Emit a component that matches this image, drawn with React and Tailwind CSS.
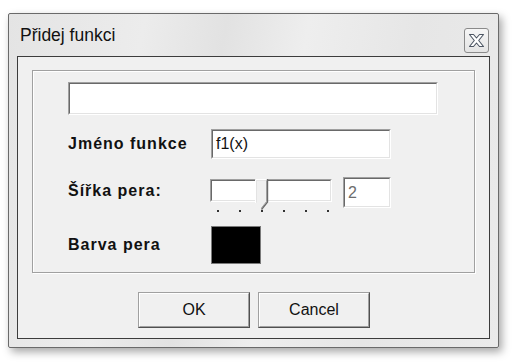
import React from "react";

function Sunken({ className = "", children }) {
  return (
    <div className={`border-t border-l border-t-[#a0a0a0] border-l-[#a0a0a0] border-b border-r border-b-white border-r-white ${className}`}>
      <div className="w-full h-full border-t border-l border-t-[#696969] border-l-[#696969] border-b border-r border-b-[#e3e3e3] border-r-[#e3e3e3] bg-white flex items-center">
        {children}
      </div>
    </div>
  );
}

function Button({ children }) {
  return (
    <div className="w-[112px] h-[36px] border-t border-l border-t-[#a0a0a0] border-l-[#a0a0a0] border-b border-r border-b-[#505050] border-r-[#505050]">
      <div className="w-full h-full border-t border-l border-t-white border-l-white border-b border-r border-b-[#a0a0a0] border-r-[#a0a0a0] bg-[#f0f0f0] flex items-center justify-center text-[16px] text-[#111] pb-[1px]">
        {children}
      </div>
    </div>
  );
}

function Label({ children }) {
  return (
    <div className="font-bold text-[16px] tracking-[1px] text-[#111] leading-none">{children}</div>
  );
}

export default function App() {
  const ticks = [7, 29, 51, 73, 95, 117];
  return (
    <div
      className="w-[514px] h-[363px] bg-white pt-[13px] pl-[8px]"
      style={{ fontFamily: '"Liberation Sans", Arial, sans-serif' }}
    >
      <div className="w-[491px] h-[335px] border border-[#6a6a6a] rounded-[2px] shadow-[3px_4px_8px_rgba(0,0,0,0.35)] bg-[linear-gradient(100deg,#e4e4e4_0%,#ececec_25%,#e2e2e2_40%,#eeeeee_55%,#e6e6e6_75%,#ebebeb_100%)] flex flex-col">
        {/* title bar */}
        <div className="h-[42px] flex items-start justify-between pl-[11px] pr-[9px]">
          <div className="pt-[11px] text-[17.5px] text-[#111] leading-[20px]">Přidej funkci</div>
          <div className="mt-[14px] w-[25px] h-[25px] border border-[#8a8a8a] rounded-[3px] bg-[linear-gradient(#f6f6f6,#e4e4e4)] flex items-center justify-center">
            <svg width="23" height="23" viewBox="0 0 23 23">
              <polygon
                points="4.5,5.5 8.5,5.5 11.5,9 14.5,5.5 18.5,5.5 13.7,11.5 18.5,17.5 14.5,17.5 11.5,14 8.5,17.5 4.5,17.5 9.3,11.5"
                fill="#ffffff"
                stroke="#4d5663"
                strokeWidth="1.1"
                strokeLinejoin="round"
              />
            </svg>
          </div>
        </div>
        {/* client area */}
        <div className="mx-[8px] w-[473px] h-[283px] border border-[#3c3c3c] bg-[#f0f0f0] flex flex-col">
          <div className="ml-[14px] mt-[13px] w-[443px] h-[203px] border border-[#a0a0a0] shadow-[inset_1px_1px_0_#ffffff,1px_1px_0_#ffffff] flex flex-col pl-[35px]">
            <Sunken className="mt-[11px] w-[370px] h-[33px]" />
            {/* row 1 */}
            <div className="mt-[14px] flex items-center h-[30px]">
              <div className="w-[143px]">
                <Label>Jméno funkce</Label>
              </div>
              <Sunken className="w-[180px] h-[30px]">
                <span className="pl-[3px] text-[16px] text-[#111] leading-none">f1(x)</span>
              </Sunken>
            </div>
            {/* row 2 */}
            <div className="mt-[18px] flex items-start">
              <div className="w-[142px] h-[27px] flex items-center">
                <Label>Šířka pera:</Label>
              </div>
              <div className="relative w-[122px] h-[36px] mt-[2px]">
                <Sunken className="w-[122px] h-[23px]" />
                <div className="h-[3px] mt-[8px] relative">
                  {ticks.map((t) => (
                    <div key={t} className="absolute top-0 w-[2px] h-[2px] bg-[#333]" style={{ left: t }} />
                  ))}
                </div>
                <svg className="absolute left-[45px] top-0" width="14" height="31" viewBox="0 0 14 31">
                  <polygon points="0.5,0.5 12.5,0.5 12.5,23 6.5,30 0.5,24" fill="#f0f0f0" />
                  <polyline points="0.5,24 0.5,0.5 12,0.5" fill="none" stroke="#ffffff" strokeWidth="1" />
                  <polyline points="1.5,23.5 1.5,1.5 11,1.5" fill="none" stroke="#e3e3e3" strokeWidth="1" />
                  <polyline points="12.5,0 12.5,23 6.5,30.5" fill="none" stroke="#6a6a6a" strokeWidth="1.4" />
                  <polyline points="11.5,1.5 11.5,22.6 6.5,29" fill="none" stroke="#a0a0a0" strokeWidth="1" />
                </svg>
              </div>
              <Sunken className="ml-[11px] w-[48px] h-[31px]">
                <span className="pl-[3px] text-[16px] text-[#6d6d6d] leading-none">2</span>
              </Sunken>
            </div>
            {/* row 3 */}
            <div className="mt-[11px] flex items-center">
              <div className="w-[143px]">
                <Label>Barva pera</Label>
              </div>
              <div className="w-[50px] h-[38px] bg-black border border-[#7a7a7a]" />
            </div>
          </div>
          <div className="mt-[19px] flex justify-center gap-[8px] pl-[1px]">
            <Button>OK</Button>
            <Button>Cancel</Button>
          </div>
        </div>
      </div>
    </div>
  );
}
